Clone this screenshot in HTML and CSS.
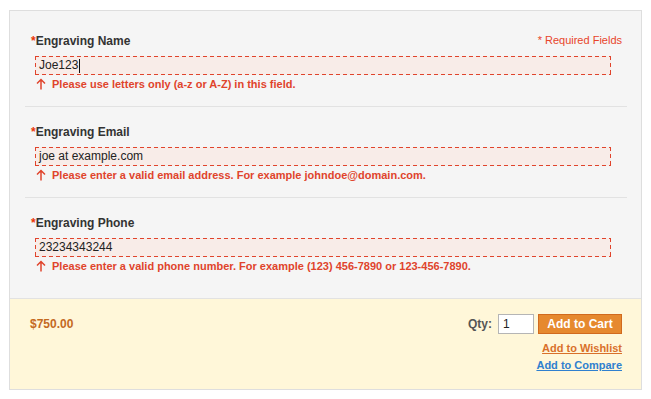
FILE: index.html
```html
<!DOCTYPE html>
<html>
<head>
<meta charset="utf-8">
<link rel="stylesheet" href="styles.css">
</head>
<body>
<div class="box">
  <div class="options">
    <div class="field first">
      <div class="label-row">
        <label class="label"><em>*</em>Engraving Name</label>
        <span class="required">* Required Fields</span>
      </div>
      <div class="input"><span>Joe123</span><span class="caret"></span></div>
      <div class="advice"><svg class="arrow" width="10" height="12" viewBox="0 0 10 12"><path d="M5 11.5V1.5M1 5.5L5 1.5L9 5.5" fill="none" stroke="#e0442c" stroke-width="1.5"/></svg>Please use letters only (a-z or A-Z) in this field.</div>
    </div>
    <div class="field">
      <label class="label"><em>*</em>Engraving Email</label>
      <div class="input"><span>joe at example.com</span></div>
      <div class="advice"><svg class="arrow" width="10" height="12" viewBox="0 0 10 12"><path d="M5 11.5V1.5M1 5.5L5 1.5L9 5.5" fill="none" stroke="#e0442c" stroke-width="1.5"/></svg>Please enter a valid email address. For example johndoe@domain.com.</div>
    </div>
    <div class="field last">
      <label class="label"><em>*</em>Engraving Phone</label>
      <div class="input"><span>23234343244</span></div>
      <div class="advice"><svg class="arrow" width="10" height="12" viewBox="0 0 10 12"><path d="M5 11.5V1.5M1 5.5L5 1.5L9 5.5" fill="none" stroke="#e0442c" stroke-width="1.5"/></svg>Please enter a valid phone number. For example (123) 456-7890 or 123-456-7890.</div>
    </div>
  </div>
  <div class="bottom">
    <div class="price">$750.00</div>
    <div class="actions">
      <div class="cart-row">
        <span class="qty-label">Qty:</span>
        <div class="qty">1</div>
        <button class="btn-cart">Add to Cart</button>
      </div>
      <a class="link wishlist" href="#">Add to Wishlist</a>
      <a class="link compare" href="#">Add to Compare</a>
    </div>
  </div>
</div>
</body>
</html>
```
FILE: styles.css
```css
html, body {
  margin: 0;
  padding: 0;
  background: #ffffff;
}
body {
  font-family: "Liberation Sans", Arial, Helvetica, sans-serif;
  color: #333333;
}
.box {
  margin: 10px 9px 0 9px;
  border: 1px solid #dedede;
}
.options {
  background: #f5f5f5;
  padding: 0 14px 0 15px;
}
.field {
  padding: 17px 0 15px 6px;
  border-top: 1px solid #e2e2e2;
}
.field.first {
  border-top: none;
  padding-top: 22px;
}
.field.last {
  padding-bottom: 25px;
}
.label-row {
  display: flex;
  justify-content: space-between;
  align-items: center;
}
.label {
  display: block;
  font-size: 12px;
  font-weight: bold;
  line-height: 16px;
  color: #333333;
}
.label em {
  font-style: normal;
  color: #eb340a;
  font-weight: bold;
}
.required {
  font-size: 11px;
  line-height: 16px;
  color: #e8442a;
  margin-right: 5px;
  margin-top: -2px;
}
.input {
  margin: 7px 16px 0 4px;
  height: 19px;
  box-sizing: border-box;
  padding-left: 4px;
  background-color: #f8ece8;
  background-image:
    repeating-linear-gradient(90deg, #e0442c 0 4px, transparent 4px 7px),
    repeating-linear-gradient(90deg, #e0442c 0 4px, transparent 4px 7px),
    repeating-linear-gradient(180deg, #e0442c 0 4px, transparent 4px 7px),
    repeating-linear-gradient(180deg, #e0442c 0 4px, transparent 4px 7px);
  background-size: 100% 1px, 100% 1px, 1px 100%, 1px 100%;
  background-position: 0 0, 0 100%, 0 0, 100% 0;
  background-repeat: no-repeat;
  font-size: 12px;
  line-height: 17px;
  color: #222222;
  display: flex;
  align-items: center;
}
.caret {
  display: inline-block;
  width: 1px;
  height: 14px;
  background: #111111;
  margin-left: 1px;
}
.advice {
  margin-top: 2px;
  margin-left: 5px;
  font-size: 11px;
  font-weight: bold;
  line-height: 14px;
  color: #e0442c;
  display: flex;
  align-items: center;
}
.arrow {
  margin-right: 6px;
  flex: none;
}
.bottom {
  background: #fff7d9;
  border-top: 1px solid #e2e2e2;
  padding: 15px 19px 15px 20px;
  display: flex;
  justify-content: space-between;
  align-items: flex-start;
}
.price {
  font-size: 12px;
  font-weight: bold;
  color: #c4691f;
  line-height: 20px;
}
.actions {
  display: flex;
  flex-direction: column;
  align-items: flex-end;
}
.cart-row {
  display: flex;
  align-items: center;
  height: 20px;
  margin-bottom: 6px;
}
.qty-label {
  font-size: 12px;
  font-weight: bold;
  color: #555555;
  margin-right: 6px;
}
.qty {
  width: 36px;
  height: 20px;
  box-sizing: border-box;
  border: 1px solid #b5b5b5;
  background: #ffffff;
  font-size: 12px;
  line-height: 18px;
  padding-left: 4px;
  color: #222222;
  margin-right: 4px;
}
.btn-cart {
  width: 84px;
  height: 20px;
  box-sizing: border-box;
  border: 1px solid #d16a1e;
  background: #e6892f;
  color: #ffffff;
  font-family: "Liberation Sans", Arial, sans-serif;
  font-size: 12px;
  font-weight: bold;
  padding: 0;
  line-height: 18px;
}
.link {
  font-size: 11px;
  font-weight: bold;
  line-height: 17px;
  text-decoration: underline;
}
.wishlist {
  color: #d9702a;
}
.compare {
  color: #2f80cf;
}
```
